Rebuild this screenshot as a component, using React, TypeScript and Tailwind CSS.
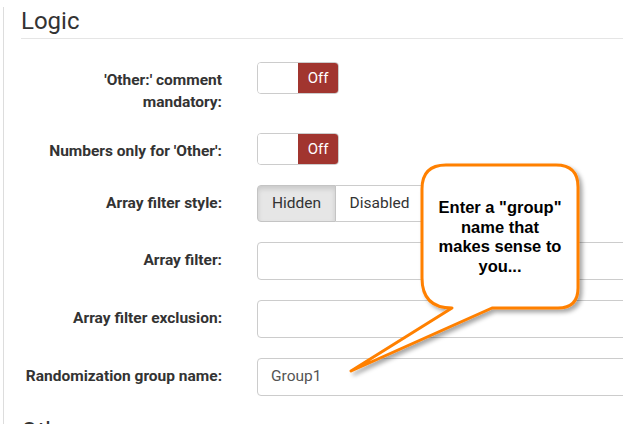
import React from 'react';

const labelCls =
    "w-[201px] shrink-0 whitespace-nowrap pt-[7px] text-right text-[15.5px] leading-[22px] font-bold text-[#333]";

const Toggle = () => (
    <div className="flex h-[32px] w-[82px] overflow-hidden rounded-[4px] border border-[#ccc]">
        <div className="w-[41px] bg-white" />
        <div className="flex w-[41px] items-center justify-center bg-[#a1352f] text-[15px] text-white">Off</div>
    </div>
);

const TextInput = ({ value = '' }: { value?: string }) => (
    <div className="flex h-[38px] flex-1 items-center rounded-[4px] border border-[#ccc] bg-white px-[13px] text-[15.5px] text-[#555]">
        {value}
    </div>
);

const Row = ({ label, children }: { label: React.ReactNode; children: React.ReactNode }) => (
    <div className="flex items-start gap-[35px]">
        <div className={labelCls}>{label}</div>
        {children}
    </div>
);

export default function App() {
    return (
        <div className="relative h-[424px] w-[623px] overflow-hidden bg-white" style={{ fontFamily: 'Roboto, "Liberation Sans", sans-serif' }}>
            <div className="ml-[3px] h-full w-[720px] border-l border-[#ddd] pl-[17px]">
                {/* Logic section */}
                <h2 className="mt-[7px] border-b border-[#e5e5e5] pb-[3px] text-[24px] leading-[28px] font-normal text-[#333]">Logic</h2>

                <div className="mt-[23px] flex flex-col gap-[20px]">
                    <Row label={<>'Other:' comment<br />mandatory:</>}>
                        <Toggle />
                    </Row>
                    <Row label="Numbers only for 'Other':">
                        <Toggle />
                    </Row>
                    <Row label="Array filter style:">
                        <div className="flex h-[37px] text-[15.5px] text-[#333]">
                            <div className="flex w-[79px] items-center justify-center rounded-l-[4px] border border-[#c4c4c4] bg-[#e6e6e6] shadow-[inset_0_3px_5px_rgba(0,0,0,0.125)]">Hidden</div>
                            <div className="flex w-[88px] items-center justify-center border border-l-0 border-[#ccc] bg-white">Disabled</div>
                            <div className="flex w-[80px] items-center justify-center rounded-r-[4px] border border-l-0 border-[#ccc] bg-white">Enabled</div>
                        </div>
                    </Row>
                    <Row label="Array filter:">
                        <TextInput />
                    </Row>
                    <Row label="Array filter exclusion:">
                        <TextInput />
                    </Row>
                    <Row label="Randomization group name:">
                        <TextInput value="Group1" />
                    </Row>
                </div>

                <h2 className="mt-[21px] text-[24px] leading-[28px] font-normal text-[#333]">Other</h2>
            </div>

            {/* Callout */}
            <svg className="pointer-events-none absolute left-0 top-0" width="623" height="424" viewBox="0 0 623 424">
                <defs>
                    <filter id="sh" x="-20%" y="-20%" width="140%" height="140%">
                        <feDropShadow dx="3" dy="3" stdDeviation="2" floodColor="#000" floodOpacity="0.35" />
                    </filter>
                </defs>
                <path
                    d="M446,165 H556 Q578,165 578,187 V288 Q578,308 558,308 H492 L351,371 L452,308 H452 Q422,308 422,278 V189 Q422,165 446,165 Z"
                    fill="#fff"
                    stroke="#ff8000"
                    strokeWidth="3"
                    strokeLinejoin="round"
                    filter="url(#sh)"
                />
            </svg>
            <div
                className="absolute left-[422px] top-[198px] w-[156px] text-center text-[16.5px] leading-[19.5px] font-bold text-black"
                style={{ fontFamily: '"Liberation Sans", Arial, sans-serif' }}
            >
                Enter a "group"<br />name that<br />makes sense to<br />you...
            </div>
        </div>
    );
}
